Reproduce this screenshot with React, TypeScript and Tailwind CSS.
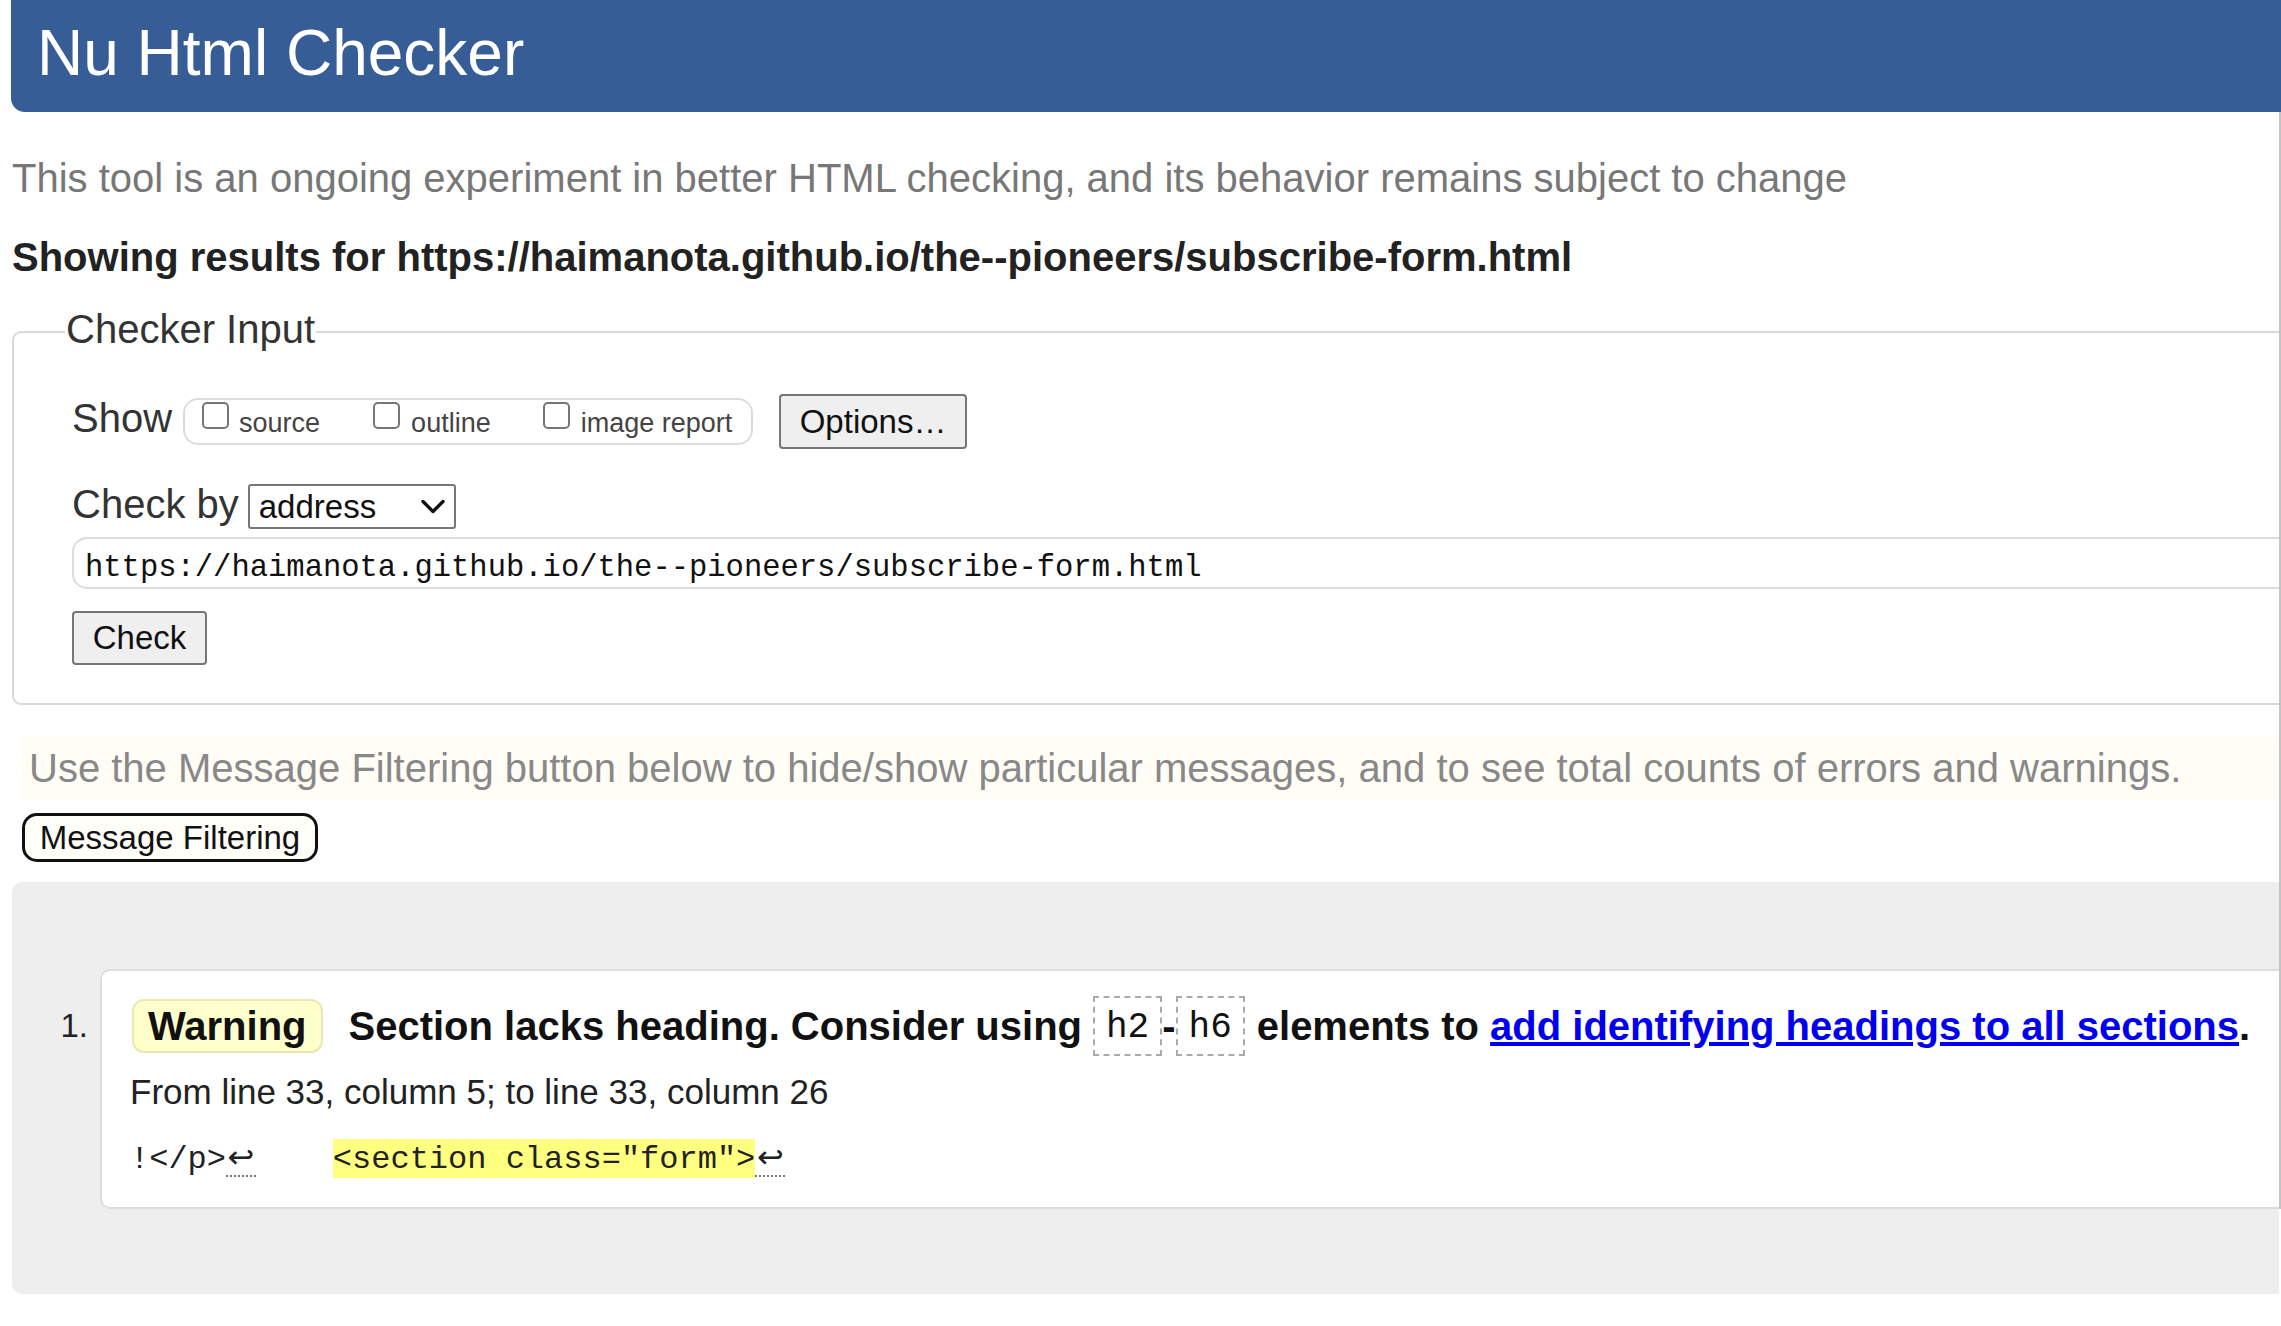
import React from "react";

function Lf() {
  return (
    <span className="inline-block w-[30px] border-b-2 border-dotted border-[#777] text-center font-['DejaVu_Sans',sans-serif] leading-[36px]">
      ↩
    </span>
  );
}

export default function App() {
  return (
    <div className="h-[1326px] w-[2281px] overflow-hidden bg-white font-['Liberation_Sans',Arial,sans-serif] text-[#222]">
      <header className="ml-[11px] h-[112px] rounded-bl-[14px] bg-[#365d95] pl-[26px]">
        <h1 className="whitespace-nowrap text-[64px] font-normal leading-[106px] text-white">Nu Html Checker</h1>
      </header>
      <div className="flex">
        <main className="min-w-0 flex-1 overflow-hidden">
          <p className="ml-[12px] mt-[42px] whitespace-nowrap text-[40px] leading-[48px] text-[#777]">
            This tool is an ongoing experiment in better HTML checking, and its behavior remains subject to change
          </p>
          <h2 className="ml-[12px] mt-[31px] whitespace-nowrap text-[40px] font-bold leading-[48px] text-[#222]">
            Showing results for https://haimanota.github.io/the--pioneers/subscribe-form.html
          </h2>
          <fieldset className="-mr-[40px] ml-[12px] mt-[28px] rounded-[9px] border-2 border-[#d9d9d9] pb-[38px] pl-[58px] pt-[39px]">
            <legend className="-ml-[7px] px-[1px] pb-[6px] text-[40px] leading-[40px] text-[#333]">Checker Input</legend>
            <div className="flex h-[55px] items-center">
              <span className="mb-[7px] text-[40px] leading-[48px] text-[#333]">Show</span>
              <div className="ml-[11px] flex h-[47px] w-[570px] items-start rounded-[15px] border-2 border-[#dcdcdc] pl-[17px] text-[27px] text-[#444]">
                <input
                  type="checkbox"
                  className="mt-[2px] h-[27px] w-[27px] shrink-0 appearance-none rounded-[5px] border-2 border-[#767676] bg-white"
                />
                <span className="ml-[10px] mt-[7px] leading-[32px]">source</span>
                <input
                  type="checkbox"
                  className="ml-[53px] mt-[2px] h-[27px] w-[27px] shrink-0 appearance-none rounded-[5px] border-2 border-[#767676] bg-white"
                />
                <span className="ml-[11px] mt-[7px] leading-[32px]">outline</span>
                <input
                  type="checkbox"
                  className="ml-[52px] mt-[2px] h-[27px] w-[27px] shrink-0 appearance-none rounded-[5px] border-2 border-[#767676] bg-white"
                />
                <span className="ml-[11px] mt-[7px] leading-[32px]">image report</span>
              </div>
              <button className="ml-[26px] h-[55px] w-[188px] rounded-[4px] border-2 border-[#767676] bg-[#efefef] text-[33px] leading-[40px] text-[#111]">
                Options…
              </button>
            </div>
            <div className="mt-[35px] flex h-[45px] items-center">
              <span className="mb-[5px] text-[40px] leading-[48px] text-[#333]">Check by</span>
              <div className="ml-[9px] flex h-[45px] w-[208px] items-center justify-between rounded-[3px] border-2 border-[#767676] bg-white pl-[9px] pr-[9px]">
                <span className="text-[33px] leading-[40px] text-[#111]">address</span>
                <svg width="24" height="16" viewBox="0 0 24 16" fill="none">
                  <path d="M2 2.5 L12 12.5 L22 2.5" stroke="#111" strokeWidth="3.4" strokeLinecap="round" strokeLinejoin="round" />
                </svg>
              </div>
            </div>
            <input
              readOnly
              value="https://haimanota.github.io/the--pioneers/subscribe-form.html"
              className="mt-[8px] block h-[52px] w-full rounded-[15px] border-2 border-[#dcdcdc] bg-white pl-[11px] pt-[10px] font-['Liberation_Mono',monospace] text-[30.5px] text-[#111] outline-none"
            />
            <button className="mt-[22px] block h-[54px] w-[135px] rounded-[4px] border-2 border-[#767676] bg-[#efefef] text-[33px] leading-[40px] text-[#111]">
              Check
            </button>
          </fieldset>

          <div className="ml-[20px] mt-[32px] h-[63px] whitespace-nowrap bg-[#fffdf6] pl-[9px] pt-[7px] text-[40px] leading-[48px] text-[#888]">
            Use the Message Filtering button below to hide/show particular messages, and to see total counts of errors and warnings.
          </div>
          <button className="ml-[22px] mt-[13px] block h-[49px] w-[296px] rounded-[15px] border-[3px] border-[#111] bg-[#fffef9] text-[33px] leading-[40px] text-[#111]">
            Message Filtering
          </button>

          <div className="-mr-[40px] ml-[12px] mt-[20px] rounded-l-[10px] bg-[#eeeeee] pb-[85px] pt-[87px]">
            <ol>
              <li className="flex">
                <span className="mt-[37px] w-[88px] shrink-0 pr-[12px] text-right text-[33px] leading-[40px] text-[#222]">1.</span>
                <div className="min-w-0 flex-1 rounded-[10px] border-2 border-[#dddddd] bg-white pb-[25px] pl-[28px] pt-[25px]">
                  <div className="flex h-[60px] items-center whitespace-nowrap text-[40px] font-bold leading-[48px] text-[#111]">
                    <span className="ml-[2px] flex h-[54px] shrink-0 items-center rounded-[12px] border-2 border-[#e8e8b0] bg-[#ffffcc] px-[14px]">
                      Warning
                    </span>
                    <span className="ml-[26px] shrink-0">Section lacks heading. Consider using</span>
                    <code className="ml-[11px] h-[60px] shrink-0 border-2 border-dashed border-[#aaa] px-[11px] pt-[3px] font-['Liberation_Mono',monospace] text-[36px] font-normal leading-[53px]">
                      h2
                    </code>
                    <span className="shrink-0">-</span>
                    <code className="h-[60px] shrink-0 border-2 border-dashed border-[#aaa] px-[11px] pt-[3px] font-['Liberation_Mono',monospace] text-[36px] font-normal leading-[53px]">
                      h6
                    </code>
                    <span className="ml-[12px] shrink-0">elements to</span>
                    <a href="#" className="ml-[11px] shrink-0 text-[#0000ee] underline">
                      add identifying headings to all sections
                    </a>
                    <span className="shrink-0">.</span>
                  </div>
                  <div className="mt-[16px] whitespace-nowrap text-[35px] leading-[40px] text-[#222]">
                    From line 33, column 5; to line 33, column 26
                  </div>
                  <div className="mt-[26px] whitespace-pre font-['Liberation_Mono',monospace] text-[32px] leading-[44px] text-[#222]">
                    {"!</p>"}
                    <Lf />
                    {"    "}
                    <span className="inline-block h-[39px] bg-[#ffff80] pt-[3px] leading-[36px]">{'<section class="form">'}</span>
                    <Lf />
                  </div>
                </div>
              </li>
            </ol>
          </div>
        </main>
        <div className="h-[1097px] w-[2px] shrink-0 bg-[#c4c4c4]" />
      </div>
    </div>
  );
}
